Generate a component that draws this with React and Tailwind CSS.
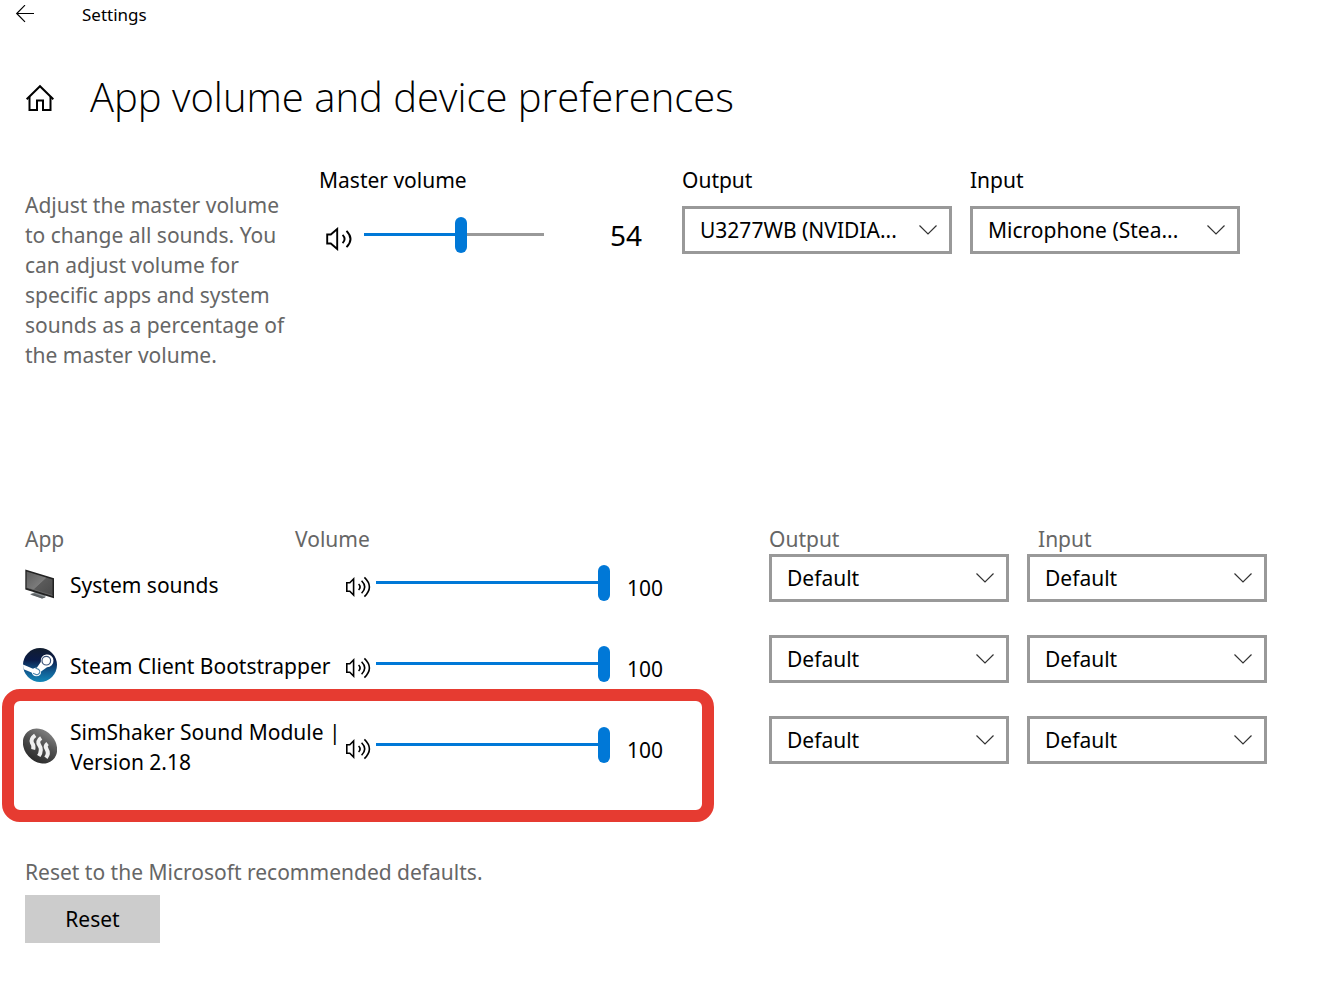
import { useState } from 'react';

const apps = [
  { id: 'system', name: 'System sounds', Icon: MonitorIcon },
  { id: 'steam', name: 'Steam Client Bootstrapper', Icon: SteamIcon },
  { id: 'simshaker', name: 'SimShaker Sound Module | Version 2.18', Icon: ShakerIcon, highlighted: true },
];

function BackIcon() {
  return (
    <svg width="20" height="20" viewBox="0 0 20 20" fill="none" stroke="#000" strokeWidth="1.2" aria-hidden="true">
      <path d="M19 8.500H1.800M10 .2 1.700 8.500 10 16.800" />
    </svg>
  );
}

function HomeIcon() {
  return (
    <svg width="30" height="28" viewBox="0 0 30 28" fill="none" stroke="#000" strokeWidth="2" aria-hidden="true">
      <path d="M1.7 15.3 15 2.2l13.3 13.1" />
      <path d="M4.5 12.8V26H12v-9.5h6V26h7.5V12.8" />
    </svg>
  );
}

function SpeakerIcon() {
  return (
    <svg width="26" height="24" viewBox="0 0 26 24" fill="none" stroke="#000" strokeWidth="1.9" aria-hidden="true">
      <path d="M1.200 7.500h3.600L11.200 2v20l-6.400-5.500H1.200z" />
      <path d="M16.600 7.800q4 4.200 0 8.400M20.500 3.800q8 8.200 0 16.400" />
    </svg>
  );
}

function SpeakerFullIcon() {
  return (
    <svg width="26" height="22" viewBox="0 0 26 22" fill="none" stroke="#000" strokeWidth="1.6" aria-hidden="true">
      <path d="M1.800 6.800h3L8.600 3v16l-3.800-3.800h-3z" />
      <path d="M13.600 8q3 3 0 6M16.600 4.800q6.200 6.200 0 12.400M19.400 1.400q10 9.600 0 19.200" />
    </svg>
  );
}

function MonitorIcon() {
  return (
    <svg width="34" height="34" viewBox="0 0 34 34" aria-hidden="true">
      <defs>
        <linearGradient id="screen" x1="0" y1="0" x2="1" y2="1">
          <stop offset="0" stopColor="#5c5c5c" />
          <stop offset="0.5" stopColor="#7b7b7b" />
          <stop offset="0.52" stopColor="#5a5a5a" />
          <stop offset="1" stopColor="#4a4a4a" />
        </linearGradient>
      </defs>
      <path d="m7.500 27 7-3 8 3.500v2.800l-3.500 1.200z" fill="#8a8f92" />
      <path d="M7 27.500 19 31.500l3.500-1-11-4z" fill="#5d6265" />
      <path d="M2.300 2.500 31 11.300v20L2.300 22.500z" fill="#222" />
      <path d="M3.600 4.500 29.500 12.500v16L3.600 20.500z" fill="url(#screen)" />
      <path d="m3.600 20.500 25.900 8" stroke="#777" strokeWidth="0.7" />
    </svg>
  );
}

function SteamIcon() {
  return (
    <svg width="34" height="34" viewBox="0 0 34 34" aria-hidden="true">
      <defs>
        <linearGradient id="steam" x1="0" y1="0" x2="0" y2="1">
          <stop offset="0" stopColor="#111d2e" />
          <stop offset="0.35" stopColor="#0a1b48" />
          <stop offset="0.7" stopColor="#115c92" />
          <stop offset="1" stopColor="#1387b8" />
        </linearGradient>
        <clipPath id="steam-clip">
          <circle cx="17" cy="17" r="17" />
        </clipPath>
      </defs>
      <circle cx="17" cy="17" r="17" fill="url(#steam)" />
      <g clipPath="url(#steam-clip)">
        <path
          d="m0 16.500 10 4.200q2-1.200 3.800-.9l4-5.700A6.400 6.400 0 1 1 24 19.200l-5.900 4.300q0 4.700-4.800 4.800-3.700-.2-4.700-3.800L0 21z"
          fill="#fff"
        />
        <circle cx="23.300" cy="12.700" r="4.300" fill="none" stroke="#3b5379" strokeWidth="1.2" />
        <path
          d="m10 25.200 2.400 1a2.900 2.900 0 1 0 2.200-5.300l-2.200-.9"
          fill="none"
          stroke="#4d86ad"
          strokeWidth="1.1"
        />
      </g>
    </svg>
  );
}

function ShakerIcon() {
  return (
    <svg width="34" height="36" viewBox="0 0 34 36" aria-hidden="true">
      <defs>
        <linearGradient id="shaker" x1="0.2" y1="0" x2="0.6" y2="1">
          <stop offset="0" stopColor="#858585" />
          <stop offset="0.5" stopColor="#4f4f4f" />
          <stop offset="1" stopColor="#2c2c2c" />
        </linearGradient>
      </defs>
      <ellipse cx="17" cy="18" rx="19" ry="15.500" transform="rotate(48 17 18)" fill="url(#shaker)" />
      <g fill="none" stroke="#efefef" strokeWidth="4">
        <path d="M12.200 7.300q-5 3.400-3.200 7.700 2.200 2.600 1.200 6.500" />
        <path d="M18.200 10q-4.800 3-1.800 7.400 3.200 4.600-.6 10.600" />
        <path d="M24.500 15.500q-3.300 2.500-.8 5.800 2.600 4-.8 8.500" />
      </g>
    </svg>
  );
}

function Slider({ label, value, onChange }) {
  const fill = `calc(6px + (100% - 12px) * ${value / 100})`;

  return (
    <input
      type="range"
      min="0"
      max="100"
      aria-label={label}
      value={value}
      onChange={(e) => onChange(Number(e.target.value))}
      className="block h-9 w-full appearance-none bg-[length:100%_3px] bg-[position:0_16px] bg-no-repeat [&::-webkit-slider-thumb]:h-9 [&::-webkit-slider-thumb]:w-3 [&::-webkit-slider-thumb]:appearance-none [&::-webkit-slider-thumb]:rounded-full [&::-webkit-slider-thumb]:bg-[#0078d7]"
      style={{ backgroundImage: `linear-gradient(to right, #0078d7 ${fill}, #999 ${fill})` }}
    />
  );
}

function Dropdown({ id, label, options }) {
  return (
    <div className="relative">
      <select
        id={id}
        aria-label={label}
        className="block h-12 w-full appearance-none border-3 border-[#999] bg-white pr-10 pl-[15px] text-[21px]"
      >
        {options.map((option) => (
          <option key={option}>{option}</option>
        ))}
      </select>
      <svg
        width="20"
        height="12"
        viewBox="0 0 20 12"
        fill="none"
        stroke="#333"
        strokeWidth="1.2"
        className="pointer-events-none absolute top-[18px] right-[14px]"
        aria-hidden="true"
      >
        <path d="m1.500 1.500 8.500 8.500 8.500-8.500" />
      </svg>
    </div>
  );
}

function AppRow({ app }) {
  const [volume, setVolume] = useState(100);
  const { Icon } = app;

  return (
    <tr className="h-[81px] align-top">
      <th scope="row" colSpan={2} className="relative text-left font-normal">
        <div className="flex h-[62px] items-center gap-[13px]">
          <span className="mb-[2px] shrink-0">
            <Icon />
          </span>
          <span>{app.name}</span>
        </div>
        {app.highlighted && (
          <div className="pointer-events-none absolute -top-[27px] -left-[21px] h-[133px] w-[712px] rounded-[18px] border-12 border-[#e63b31]" />
        )}
      </th>
      <td>
        <div className="flex h-[62px] items-center">
          <span className="mt-1 shrink-0">
            <SpeakerFullIcon />
          </span>
          <div className="mb-1 ml-[5px] w-[234px]">
            <Slider label={`${app.name} volume`} value={volume} onChange={setVolume} />
          </div>
          <span className="mt-[6px] ml-[17px]">{volume}</span>
        </div>
      </td>
      <td>
        <div className="w-60">
          <Dropdown label={`${app.name} output`} options={['Default']} />
        </div>
      </td>
      <td>
        <div className="w-60">
          <Dropdown label={`${app.name} input`} options={['Default']} />
        </div>
      </td>
    </tr>
  );
}

export default function App() {
  const [master, setMaster] = useState(54);

  return (
    <div className="min-h-screen bg-white font-['Noto_Sans',sans-serif] text-[21px] leading-[30px] text-black">
      <header className="flex h-[30px] items-center pl-[15px]">
        <button type="button" aria-label="Back">
          <BackIcon />
        </button>
        <span className="ml-[47px] text-[17px]">Settings</span>
      </header>

      <main className="px-[25px]">
        <div className="mt-9 flex h-16 items-center gap-[35px]">
          <a href="#home" aria-label="Home">
            <HomeIcon />
          </a>
          <h1 className="pb-[2px] font-['Open_Sans',sans-serif] text-[40px] font-[340]">
            App volume and device preferences
          </h1>
        </div>

        <section className="mt-[35px] flex items-start">
          <p className="mt-[25px] w-[270px] shrink-0 text-[#666]">
            Adjust the master volume to change all sounds. You can adjust volume for specific apps and system sounds as
            a percentage of the master volume.
          </p>
          <div className="ml-6 w-[363px] shrink-0">
            <h2>Master volume</h2>
            <div className="mt-[11px] flex h-12 items-center pt-[10px]">
              <span className="mt-2 ml-[7px] shrink-0">
                <SpeakerIcon />
              </span>
              <div className="ml-3 w-[180px]">
                <Slider label="Master volume" value={master} onChange={setMaster} />
              </div>
              <span className="ml-[66px] text-[28px]">{master}</span>
            </div>
          </div>
          <div className="w-[270px]">
            <label htmlFor="output" className="mb-[11px] block">
              Output
            </label>
            <Dropdown id="output" options={['U3277WB (NVIDIA...']} />
          </div>
          <div className="ml-[18px] w-[270px]">
            <label htmlFor="input" className="mb-[11px] block">
              Input
            </label>
            <Dropdown id="input" options={['Microphone (Stea...']} />
          </div>
        </section>

        <table className="mt-[154px] -ml-[2px] w-full table-fixed">
          <colgroup>
            <col className="w-[272px]" />
            <col className="w-[50px]" />
            <col className="w-[424px]" />
            <col className="w-[258px]" />
            <col />
          </colgroup>
          <thead>
            <tr className="text-left text-[#666]">
              <th className="pl-[2px] font-normal">App</th>
              <th colSpan={2} className="font-normal">
                Volume
              </th>
              <th className="font-normal">Output</th>
              <th className="pl-[11px] font-normal">Input</th>
            </tr>
          </thead>
          <tbody>
            {apps.map((app) => (
              <AppRow key={app.id} app={app} />
            ))}
          </tbody>
        </table>

        <section className="mt-[60px]">
          <p className="text-[#666]">Reset to the Microsoft recommended defaults.</p>
          <button type="button" className="mt-2 h-12 w-[135px] bg-[#ccc]">
            Reset
          </button>
        </section>
      </main>
    </div>
  );
}
